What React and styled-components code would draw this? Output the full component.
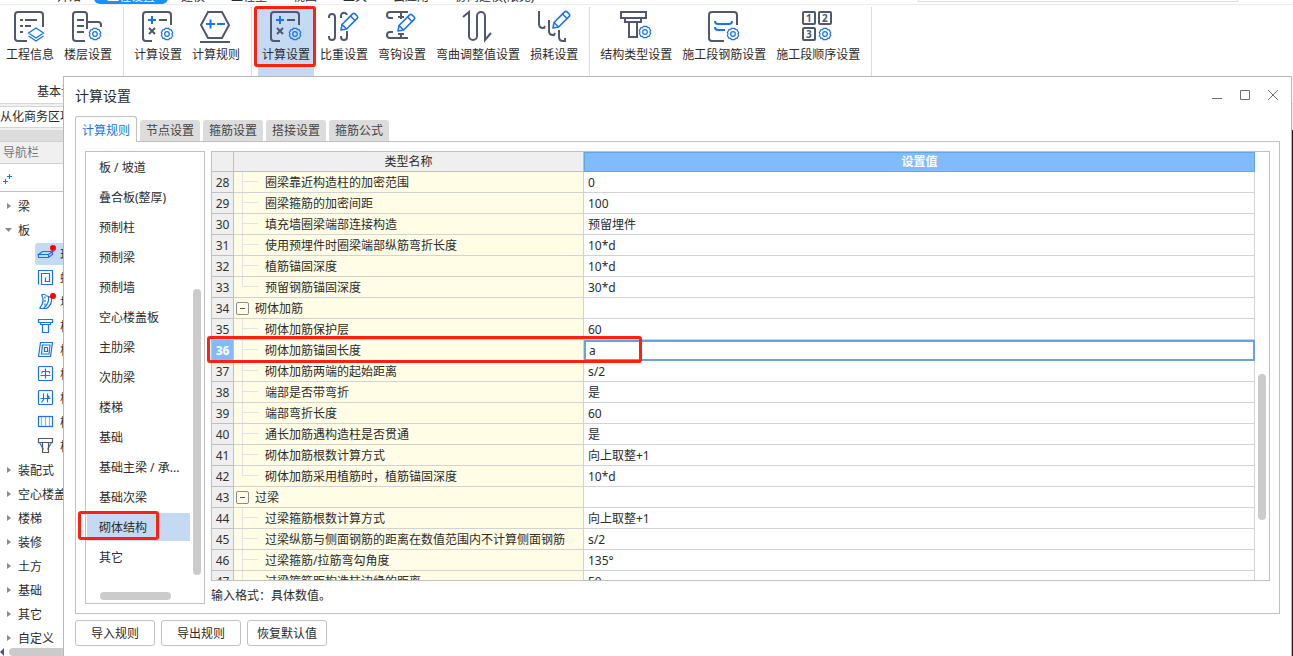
import React from "react";
import styled, { createGlobalStyle, css } from "styled-components";

const ink = "#4f586c";
const blue = "#1a73e8";
const line = "#c0c0c0";
const pick = "#c3daf2";
const mark = "#ff2010";

const GlobalStyle = createGlobalStyle`
  * { box-sizing: border-box; }
  html, body, #root { height: 100%; }
  body {
    margin: 0;
    overflow: hidden;
    background: #fff;
    color: #2b2b2b;
    font-family: "Noto Sans", "Noto Sans CJK SC", sans-serif;
    font-size: 12px;
    line-height: 16px;
  }
  button, input {
    font: inherit;
    color: inherit;
    margin: 0;
    padding: 0;
    border: 0;
    background: none;
  }
  ul { list-style: none; margin: 0; padding: 0; }
`;

const Desktop = styled.div`
  position: relative;
  display: flex;
  flex-direction: column;
  height: 100%;
  overflow: hidden;
`;

/* ---------- menu bar ---------- */

const MenuBar = styled.nav`
  display: flex;
  align-items: flex-end;
  flex: none;
  height: 5px;
  padding-left: 44px;
  border-bottom: 1px solid #ececec;
  overflow: hidden;
`;

const MenuItem = styled.button`
  flex: none;
  height: 14px;
  padding: 0 13px;
  line-height: 14px;
  white-space: nowrap;
  ${(p) =>
    p.$active &&
    css`
      color: #fff;
      background: #1890ff;
      border-radius: 0 0 6px 6px;
    `}
`;

const SearchBox = styled.input`
  width: 320px;
  height: 18px;
  margin: 0 55px 2px auto;
  border: 1px solid #dcdcdc;
`;

/* ---------- ribbon ---------- */

const Ribbon = styled.header`
  display: flex;
  flex: none;
  height: 99px;
  border-bottom: 1px solid #d6d6d6;
`;

const RibbonGroup = styled.section`
  display: flex;
  flex-direction: column;
  margin-top: 2px;
  padding: 0 6px 0 ${(p) => (p.$first ? "1px" : "5px")};
  border-right: 1px solid #dcdcdc;
`;

const RibbonTools = styled.div`
  display: flex;
  height: 70px;
`;

const RibbonCaption = styled.div`
  margin-top: 7px;
  padding-left: 4px;
  text-align: center;
`;

const RibbonButton = styled.button`
  position: relative;
  display: flex;
  flex-direction: column;
  align-items: center;
  gap: 6px;
  margin-top: 2px;
  padding: 2px 4px 0;
  border: solid transparent;
  border-width: 0 1px;
  white-space: nowrap;
  background: ${(p) => (p.$active ? pick : "none")};
  background-clip: padding-box;
`;

const ToolIcon = styled.svg`
  display: block;
  width: 32px;
  height: 30px;
  overflow: visible;
  fill: none;
  stroke: ${ink};
  stroke-width: 2;
  text {
    fill: ${ink};
    stroke: none;
    font-size: 10px;
    font-weight: 700;
  }
`;

const RedFrame = styled.span`
  position: absolute;
  border: 3px solid ${mark};
  border-radius: 3px;
  pointer-events: none;
`;

const ToolFrame = styled(RedFrame)`
  inset: -3px -2px 10px -4px;
`;

const gearPath = (cx, cy) => {
  const pts = [];
  for (let i = 0; i < 6; i += 1) {
    const a = (i * Math.PI) / 3 + Math.PI / 6;
    [[-0.3, 5.9], [0.3, 5.9], [0.52, 4.9]].forEach(([d, r]) => {
      pts.push(`${(cx + r * Math.cos(a + d)).toFixed(2)} ${(cy + r * Math.sin(a + d)).toFixed(2)}`);
    });
  }
  return `M${pts.join("L")}Z`;
};

const Gear = ({ x, y }) => (
  <g stroke={blue} strokeWidth="1.2" strokeLinejoin="round">
    <path d={gearPath(x, y)} />
    <circle cx={x} cy={y} r="2.3" />
  </g>
);

const Pencil = ({ x = 0, y = 0 }) => (
  <g stroke={blue} strokeWidth="1.6" strokeLinejoin="round" transform={`translate(${x} ${y})`}>
    <path d="M1 18L2 12.5L12.6 1.9Q13.8 .8 15 1.9L17.2 4Q18.3 5.2 17.2 6.4L6.6 17Z" />
    <path d="M10.5 4L15 8.5M2 12.5L6.6 17" />
  </g>
);

const glyphs = {
  info: (
    <>
      <path d="M13 30H4Q1 30 1 27V4Q1 1 4 1H26Q29 1 29 4V16" />
      <path d="M6 9H9M11 9H23M6 15H9M11 15H17M6 21H9" />
      <g stroke={blue} strokeWidth="1.4" strokeLinejoin="round">
        <path d="M14.5 22L22 17L29.5 22L22 27Z" />
        <path d="M14.5 25L22 30L29.5 25" />
      </g>
    </>
  ),
  floor: (
    <>
      <path d="M13 30H4Q1 30 1 27V4Q1 1 4 1H12Q15 1 15 4V18M15 11H26Q29 11 29 14V16" />
      <path d="M5 9H12M5 15H12M5 21H12" />
      <Gear x={23} y={23} />
    </>
  ),
  calc: (
    <>
      <path d="M10 30H4Q1 30 1 27V4Q1 1 4 1H26Q29 1 29 4V14" />
      <path d="M6 9H14M10 5V13" stroke={blue} />
      <path d="M17 9H25M7 17L13 23M13 17L7 23" />
      <Gear x={25} y={23} />
    </>
  ),
  rule: (
    <>
      <path d="M1 14L8 1H22L29 14L22 27H8ZM0 31H30" />
      <path d="M6 13H15M10.5 8.5V17.5M17 13H25" stroke={blue} />
    </>
  ),
  weight: (
    <>
      <path d="M1 7V6A3 3 0 0 1 7 6V26A3 3 0 0 1 1 26V25M13 7V6A3 3 0 0 1 19 4M13 25V26A3 3 0 0 0 19 26V20" />
      <Pencil x={12} y={1} />
    </>
  ),
  hook: (
    <>
      <path d="M22 1H4Q1 1 1 4Q1 7 4 7H7M7 21H4Q1 21 1 24Q1 27 4 27H22M15 1V8M12 6H18M15 22V27M12 23H18" />
      <Pencil x={11} y={2} />
    </>
  ),
  bend: <path d="M1 6L7 1V25A4 4 0 0 0 15 25V5A4 4 0 0 1 23 5V29L29 22" />,
  loss: (
    <>
      <path d="M1 0V13Q1 17 5 17H6L7 15M11 9V20Q11 24 15 24H16L17 22M21 19V26Q21 30 25 30H27V27" />
      <Pencil x={14} y={-1} />
    </>
  ),
  struct: (
    <>
      <path d="M1 1H26V7H1ZM5 7V11H21V7M9 11V26H17V11" />
      <Gear x={25} y={21} />
    </>
  ),
  rebar: (
    <>
      <path d="M16 30H4Q1 30 1 27V4Q1 1 4 1H26Q29 1 29 4V14" />
      <path d="M7 10Q7 13 10 13H21Q24 13 24 10M7 16Q7 19 10 19H17" stroke={blue} />
      <Gear x={25} y={23} />
    </>
  ),
  order: (
    <>
      <rect x="1" y="1" width="12" height="12" rx="1" />
      <rect x="17" y="1" width="12" height="12" rx="1" />
      <rect x="1" y="17" width="12" height="12" rx="1" />
      <text x="4" y="11">1</text>
      <text x="20" y="11">2</text>
      <text x="4" y="27">3</text>
      <Gear x={23} y={23} />
    </>
  ),
};

const ribbon = [
  { caption: "基本设置", tools: [["info", "工程信息"], ["floor", "楼层设置"]] },
  { caption: "土建设置", tools: [["calc", "计算设置"], ["rule", "计算规则"]] },
  {
    caption: "钢筋设置",
    tools: [
      ["calc", "计算设置", true],
      ["weight", "比重设置"],
      ["hook", "弯钩设置"],
      ["bend", "弯曲调整值设置"],
      ["loss", "损耗设置"],
    ],
  },
  {
    caption: "施工段设置",
    tools: [["struct", "结构类型设置"], ["rebar", "施工段钢筋设置"], ["order", "施工段顺序设置"]],
  },
];

/* ---------- workspace behind the dialog ---------- */

const ProjectBar = styled.div`
  flex: none;
  height: 26px;
  padding-top: 2px;
  background: #f0f0f0;
`;

const ProjectName = styled.div`
  height: 22px;
  width: 240px;
  line-height: 20px;
  border: solid #d6d6d6;
  border-width: 1px 0;
  background: #fff;
`;

const Workspace = styled.div`
  display: flex;
  flex: 1;
  min-height: 0;
  background: #1c1c1c;
`;

const Navigator = styled.aside`
  display: flex;
  flex-direction: column;
  width: 240px;
  background: #fff;
`;

const NavStrip = styled.div`
  flex: none;
  height: 11px;
  background: #dcdcdc;
`;

const NavTitle = styled.h2`
  flex: none;
  height: 23px;
  margin: 0;
  padding-left: 3px;
  border: solid #d0d0d0;
  border-width: 1px 0;
  background: #f0f0f0;
  color: #777;
  font-size: 12px;
  font-weight: 400;
  line-height: 22px;
`;

const NavTools = styled.div`
  flex: none;
  height: 28px;
  padding: 8px 3px;
  border-bottom: 1px solid ${line};
`;

const Tree = styled.ul`
  flex: 1;
  min-height: 0;
  overflow: hidden;
  padding-top: 2px;
`;

const TreeRow = styled.li`
  display: flex;
  align-items: center;
  height: 24px;
  padding-left: ${(p) => (p.$child ? "35px" : "5px")};
  white-space: nowrap;
`;

const TreeLabel = styled.span`
  display: flex;
  align-items: center;
  gap: 6px;
  height: 22px;
  padding-left: 3px;
  padding-right: 80px;
  border-radius: 3px;
  background: ${(p) => (p.$active ? pick : "none")};
`;

const TreeText = styled.span`
  padding-top: 2px;
`;

const Arrow = styled.svg`
  width: 8px;
  height: 8px;
  margin-right: 5px;
  fill: #8a8a8a;
`;

const PartIcon = styled.svg`
  width: 16px;
  height: 16px;
  overflow: visible;
  fill: none;
  stroke: ${blue};
  stroke-width: 1.2;
`;

const NavScroll = styled.div`
  display: flex;
  align-items: center;
  gap: 5px;
  flex: none;
  height: 8px;
`;

const NavThumb = styled.div`
  width: 160px;
  height: 8px;
  border-radius: 4px;
  background: #cbcbcb;
`;

const dot = <circle cx="15.5" cy="2.5" r="3" fill="#f00" stroke="none" />;

const parts = [
  { name: "现浇板", active: true, icon: <><path d="M1 9L5 6H15L11 9ZM1 9V12H11L15 9V6M11 9V12" />{dot}</> },
  { name: "螺旋板", icon: <path d="M1 15V1H15V15H4V4H12V12H8V8" /> },
  {
    name: "坡道",
    icon: <><path d="M4 1Q8 8 2 15M4 1H8M2 15H9M8 2L14 4Q15 11 9 15M11 3Q12 10 6 15" /><path d="M7.5 3V12" strokeDasharray="2 1.5" />{dot}</>,
  },
  { name: "柱帽", icon: <path d="M1 2H15V5H1ZM3 5V7H13V5M5 7V15H11V7" /> },
  { name: "板洞", icon: <><path d="M3 1H15L13 15H1Z" /><path d="M5 3.5H12.5L11.5 12.5H4ZM7 6H10V10H7Z" /></> },
  { name: "板受力筋", icon: <><rect x="1" y="1" width="14" height="14" rx="1" /><path d="M5 6H12M3 10H13M8 3V13M5 6L4 8M12 6V8" /></> },
  { name: "板负筋", icon: <><rect x="1" y="1" width="14" height="14" rx="1" /><path d="M6 4V10L4 13M10 4V13M3 9H13M10 6L12 8" /></> },
  { name: "楼层板带", icon: <><rect x="1" y="3" width="14" height="10" /><path d="M4 4V13M8 4V13M12 4V13" strokeDasharray="1 1" /></> },
  { name: "柱墩", icon: <><path d="M2 5L6 12M14 5L10 12" /><path d="M1 1H15V5H1ZM5 5V15H11V5" stroke={ink} /></> },
];

const lowerNodes = ["装配式", "空心楼盖", "楼梯", "装修", "土方", "基础", "其它", "自定义"];

const Closed = () => (
  <Arrow viewBox="0 0 8 8"><path d="M2 1L6 4L2 7Z" /></Arrow>
);

/* ---------- dialog ---------- */

const Dialog = styled.div`
  position: absolute;
  top: 76px;
  right: 1px;
  bottom: 0;
  left: 63px;
  display: flex;
  flex-direction: column;
  padding: 0 11px;
  border: solid #b8b8b8;
  border-width: 1px 1px 0;
  background: #fff;
`;

const TitleBar = styled.div`
  display: flex;
  align-items: center;
  justify-content: space-between;
  flex: none;
  height: 37px;
  margin-bottom: 2px;
`;

const Title = styled.h1`
  margin: 0;
  font-size: 14px;
  font-weight: 400;
  line-height: 20px;
`;

const WindowButtons = styled.div`
  display: flex;
  gap: 16px;
`;

const WindowButton = styled.button`
  width: 12px;
  height: 12px;
  svg {
    display: block;
    fill: none;
    stroke: #6e6e6e;
  }
`;

const Tabs = styled.div`
  display: flex;
  align-items: flex-end;
  gap: 3px;
  flex: none;
  height: 26px;
  margin-bottom: -1px;
  z-index: 1;
`;

const Tab = styled.button`
  width: 60px;
  height: 21px;
  margin-bottom: 1px;
  border-radius: 3px 3px 0 0;
  background: #dcdcdc;
  color: #444;
  ${(p) =>
    p.$active &&
    css`
      width: 62px;
      height: 26px;
      margin-bottom: 0;
      padding-top: 2px;
      border: 1px solid ${line};
      border-bottom: 0;
      background: #fff;
      color: ${blue};
    `}
`;

const Panel = styled.div`
  display: flex;
  gap: 6px;
  flex: 1;
  min-height: 0;
  padding: 9px;
  border: 1px solid ${line};
`;

const Category = styled.div`
  display: flex;
  flex-direction: column;
  flex: none;
  width: 120px;
  border: 1px solid ${line};
`;

const CategoryBody = styled.div`
  display: flex;
  justify-content: space-between;
  flex: 1;
  min-height: 0;
  padding: 1px 3px 0 1px;
`;

const CategoryList = styled.ul`
  width: 103px;
`;

const CategoryItem = styled.li`
  position: relative;
  height: 30px;
`;

const CategoryButton = styled.button`
  display: block;
  width: 100%;
  height: 28px;
  padding: 2px 0 0 12px;
  text-align: left;
  white-space: nowrap;
  background: ${(p) => (p.$active ? pick : "none")};
`;

const CategoryFrame = styled(RedFrame)`
  inset: -2px 31px 3px -9px;
`;

const VerticalThumb = styled.div`
  flex: none;
  width: 8px;
  height: ${(p) => p.$length};
  margin-top: ${(p) => p.$start};
  border-radius: 4px;
  background: #cbcbcb;
`;

const HorizontalThumb = styled.div`
  flex: none;
  width: 71px;
  height: 8px;
  margin: 3px 0 3px 14px;
  border-radius: 4px;
  background: #cbcbcb;
`;

const Detail = styled.div`
  display: flex;
  flex-direction: column;
  flex: 1;
  min-width: 0;
`;

const GridArea = styled.div`
  position: relative;
  flex: 1;
  min-height: 0;
`;

const GridFrame = styled(RedFrame)`
  top: 185px;
  left: -4px;
  width: 435px;
  height: 27px;
`;

const GridClip = styled.div`
  display: flex;
  height: 100%;
  overflow: hidden;
  border: 1px solid ${line};
`;

const Gutter = styled.div`
  flex: none;
  width: 14px;
  padding: 0 3px;
`;

const Grid = styled.table`
  flex: 1;
  align-self: flex-start;
  width: 100%;
  min-width: 0;
  table-layout: fixed;
  border-collapse: separate;
  border-spacing: 0;

  th, td {
    height: 21px;
    padding: 0;
    border: solid #d2d2d2;
    border-width: 0 1px 1px 0;
    line-height: 18px;
    font-weight: 400;
    text-align: left;
    white-space: nowrap;
  }
  thead th {
    height: 20px;
    text-align: center;
    background: #efefef;
    border-color: ${line};
  }
`;

const NumberCol = styled.col`width: 22px;`;
const NameCol = styled.col`width: 350px;`;

const ValueHead = styled.th`
  && {
    background: #82bbfb;
    border: 1px solid #62a6ea;
    color: #fff;
    font-weight: 700;
  }
`;

const RowNumber = styled.th`
  && {
    padding-top: 2px;
    text-align: center;
    border-color: ${line};
    background: ${(p) => (p.$active ? "#82bbfb" : "#efefef")};
    color: ${(p) => (p.$active ? "#fff" : "#333")};
    font-weight: ${(p) => (p.$active ? 700 : 400)};
  }
`;

const NameCell = styled.td`
  background: #fffde6;
`;

const NameBody = styled.div`
  display: flex;
  align-items: center;
  height: 20px;
`;

const NameText = styled.span`
  padding-top: 2px;
`;

const Branch = styled.span`
  flex: none;
  align-self: flex-start;
  width: 16px;
  height: ${(p) => (p.$last ? "10px" : "20px")};
  margin: 0 7px 0 8px;
  border-left: 1px solid #e2e2ea;
  background: linear-gradient(#e2e2ea, #e2e2ea) 0 9px / 100% 1px no-repeat;
`;

const Fold = styled.button`
  display: flex;
  align-items: center;
  justify-content: center;
  width: 13px;
  height: 13px;
  margin: 0 6px 0 2px;
  border: 1px solid #8c8c8c;
  border-radius: 2px;
  &::before {
    content: "";
    width: 5px;
    height: 1px;
    background: #555;
  }
`;

const ValueCell = styled.td`
  && { padding: 2px 0 0 4px; }
`;

const EditCell = styled.td`
  && {
    padding-left: 3px;
    border: 2px solid #67a3e3;
  }
`;

const ValueInput = styled.input`
  display: block;
  width: 100%;
  height: 17px;
  outline: 0;
`;

const Hint = styled.p`
  flex: none;
  height: 23px;
  margin: 0;
  padding-top: 7px;
`;

const Footer = styled.div`
  display: flex;
  gap: 6px;
  flex: none;
  height: 42px;
  padding-top: 6px;
`;

const FooterButton = styled.button`
  width: 80px;
  height: 26px;
  padding-top: 2px;
  border: 1px solid ${line};
  border-radius: 3px;
`;

const categories = [
  "板 / 坡道", "叠合板(整厚)", "预制柱", "预制梁", "预制墙", "空心楼盖板", "主肋梁",
  "次肋梁", "楼梯", "基础", "基础主梁 / 承...", "基础次梁", "砌体结构", "其它",
];

const rows = [
  [28, "圈梁靠近构造柱的加密范围", "0"],
  [29, "圈梁箍筋的加密间距", "100"],
  [30, "填充墙圈梁端部连接构造", "预留埋件"],
  [31, "使用预埋件时圈梁端部纵筋弯折长度", "10*d"],
  [32, "植筋锚固深度", "10*d"],
  [33, "预留钢筋锚固深度", "30*d", "last"],
  [34, "砌体加筋", "", "group"],
  [35, "砌体加筋保护层", "60"],
  [36, "砌体加筋锚固长度", "a", "edit"],
  [37, "砌体加筋两端的起始距离", "s/2"],
  [38, "端部是否带弯折", "是"],
  [39, "端部弯折长度", "60"],
  [40, "通长加筋遇构造柱是否贯通", "是"],
  [41, "砌体加筋根数计算方式", "向上取整+1"],
  [42, "砌体加筋采用植筋时，植筋锚固深度", "10*d", "last"],
  [43, "过梁", "", "group"],
  [44, "过梁箍筋根数计算方式", "向上取整+1"],
  [45, "过梁纵筋与侧面钢筋的距离在数值范围内不计算侧面钢筋", "s/2"],
  [46, "过梁箍筋/拉筋弯勾角度", "135°"],
  [47, "过梁箍筋距构造柱边缘的距离", "50"],
];

const menus = ["开始", "工程设置", "建模", "工程量", "视图", "工具", "云应用", "协同建模(限免)"];

export default function App() {
  return (
    <Desktop>
      <GlobalStyle />
      <MenuBar>
        {menus.map((m) => (
          <MenuItem key={m} $active={m === "工程设置"}>{m}</MenuItem>
        ))}
        <SearchBox aria-label="搜索" />
      </MenuBar>

      <Ribbon>
        {ribbon.map((group, i) => (
          <RibbonGroup key={group.caption} $first={i === 0}>
            <RibbonTools>
              {group.tools.map(([icon, label, active]) => (
                <RibbonButton key={label} $active={active}>
                  <ToolIcon viewBox="0 0 32 30">{glyphs[icon]}</ToolIcon>
                  {label}
                  {active && <ToolFrame />}
                </RibbonButton>
              ))}
            </RibbonTools>
            <RibbonCaption>{group.caption}</RibbonCaption>
          </RibbonGroup>
        ))}
      </Ribbon>

      <ProjectBar>
        <ProjectName>从化商务区项目</ProjectName>
      </ProjectBar>

      <Workspace>
        <Navigator>
          <NavStrip />
          <NavTitle>导航栏</NavTitle>
          <NavTools>
            <svg width="10" height="10" fill="none" stroke={blue}>
              <path d="M0 7.5H5M2.5 5V10M4 2.5H9M6.5 0V5" />
            </svg>
          </NavTools>
          <Tree>
            <TreeRow><Closed /><TreeText>梁</TreeText></TreeRow>
            <TreeRow>
              <Arrow viewBox="0 0 8 8"><path d="M0 2H7L3.5 6Z" /></Arrow>
              <TreeText>板</TreeText>
            </TreeRow>
            {parts.map((part) => (
              <TreeRow key={part.name} $child>
                <TreeLabel $active={part.active}>
                  <PartIcon viewBox="0.5 0.5 16 16">{part.icon}</PartIcon>
                  <TreeText>{part.name}</TreeText>
                </TreeLabel>
              </TreeRow>
            ))}
            {lowerNodes.map((name) => (
              <TreeRow key={name}><Closed /><TreeText>{name}</TreeText></TreeRow>
            ))}
          </Tree>
          <NavScroll>
            <svg width="4" height="8" fill={ink}><path d="M4 0V8L0 4Z" /></svg>
            <NavThumb />
          </NavScroll>
        </Navigator>
      </Workspace>

      <Dialog role="dialog" aria-labelledby="dialog-title">
        <TitleBar>
          <Title id="dialog-title">计算设置</Title>
          <WindowButtons>
            <WindowButton aria-label="最小化">
              <svg width="12" height="12"><path d="M0 8.5H10" /></svg>
            </WindowButton>
            <WindowButton aria-label="最大化">
              <svg width="12" height="12"><path d="M.5 .5H9.5V9.5H.5Z" /></svg>
            </WindowButton>
            <WindowButton aria-label="关闭">
              <svg width="12" height="12"><path d="M0 0L10 10M10 0L0 10" /></svg>
            </WindowButton>
          </WindowButtons>
        </TitleBar>

        <Tabs role="tablist">
          {["计算规则", "节点设置", "箍筋设置", "搭接设置", "箍筋公式"].map((t, i) => (
            <Tab key={t} role="tab" aria-selected={i === 0} $active={i === 0}>{t}</Tab>
          ))}
        </Tabs>

        <Panel>
          <Category>
            <CategoryBody>
              <CategoryList>
                {categories.map((c) => (
                  <CategoryItem key={c}>
                    <CategoryButton $active={c === "砌体结构"}>{c}</CategoryButton>
                    {c === "砌体结构" && <CategoryFrame />}
                  </CategoryItem>
                ))}
              </CategoryList>
              <VerticalThumb $start="136px" $length="286px" />
            </CategoryBody>
            <HorizontalThumb />
          </Category>

          <Detail>
            <GridArea>
              <GridClip>
                <Grid>
                  <colgroup>
                    <NumberCol />
                    <NameCol />
                    <col />
                  </colgroup>
                  <thead>
                    <tr>
                      <th aria-label="序号" />
                      <th scope="col">类型名称</th>
                      <ValueHead scope="col">设置值</ValueHead>
                    </tr>
                  </thead>
                  <tbody>
                    {rows.map(([no, name, value, kind]) => (
                      <tr key={no}>
                        <RowNumber scope="row" $active={kind === "edit"}>{no}</RowNumber>
                        <NameCell>
                          <NameBody>
                            {kind === "group" ? <Fold aria-label="折叠" /> : <Branch $last={kind === "last"} />}
                            <NameText>{name}</NameText>
                          </NameBody>
                        </NameCell>
                        {kind === "edit" ? (
                          <EditCell><ValueInput aria-label={name} defaultValue={value} /></EditCell>
                        ) : (
                          <ValueCell>{value}</ValueCell>
                        )}
                      </tr>
                    ))}
                  </tbody>
                </Grid>
                <Gutter>
                  <VerticalThumb $start="222px" $length="146px" />
                </Gutter>
              </GridClip>
              <GridFrame />
            </GridArea>
            <Hint>输入格式：具体数值。</Hint>
          </Detail>
        </Panel>

        <Footer>
          <FooterButton>导入规则</FooterButton>
          <FooterButton>导出规则</FooterButton>
          <FooterButton>恢复默认值</FooterButton>
        </Footer>
      </Dialog>
    </Desktop>
  );
}
